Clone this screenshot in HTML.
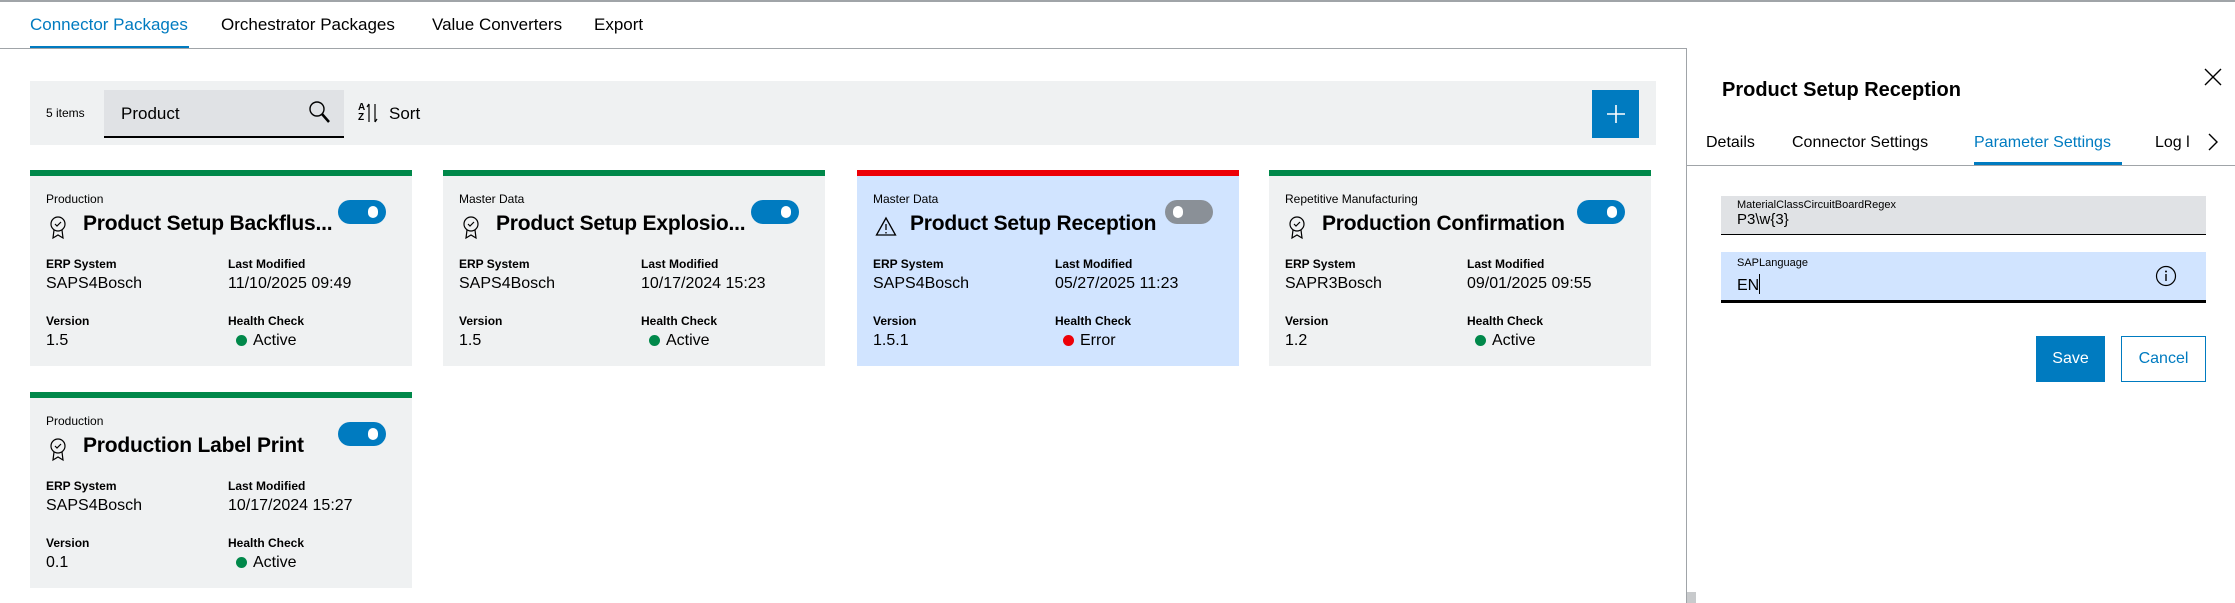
<!DOCTYPE html>
<html><head><meta charset="utf-8"><style>
*{box-sizing:border-box;margin:0;padding:0}
body{width:2235px;height:603px;overflow:hidden;background:#fff;font-family:"Liberation Sans",sans-serif;color:#000;position:relative}
.abs{position:absolute}
.topline{left:0;top:0;width:2235px;height:2px;background:#a0a4a8}
.nav{top:15px;font-size:17px;color:#000;white-space:nowrap}
.navline{left:0;top:48px;width:1686px;height:1px;background:#a0a4a8}
.toolbar{left:30px;top:81px;width:1626px;height:64px;background:#eff1f2}
.card{position:absolute;width:382px;height:196px;background:#eff1f2;border-top:6px solid #00884a}
.card .cat{position:absolute;left:16px;top:16px;font-size:12px}
.card .ic{position:absolute;left:18px;top:38px}
.card .title{position:absolute;left:53px;top:36px;font-size:21px;font-weight:bold;white-space:nowrap;letter-spacing:-0.2px}
.tog{position:absolute;left:308px;top:24px;width:48px;height:24px;border-radius:12px;background:#007bc0}
.tog:after{content:"";position:absolute;right:8px;top:6px;width:10px;height:12px;border-radius:6px;background:#fff}
.tog.off{background:#8a9097}
.tog.off:after{right:auto;left:8px}
.lb{position:absolute;font-size:12px;font-weight:bold}
.vl{position:absolute;font-size:16px}
.dot{display:inline-block;width:11px;height:11px;border-radius:50%;background:#00884a;margin-right:6px;vertical-align:-1px}
</style></head><body>
<div class="abs topline"></div>
<div class="abs nav" style="left:30px;color:#007bc0">Connector Packages</div>
<div class="abs" style="left:30px;top:46px;width:159px;height:3px;background:#007bc0"></div>
<div class="abs nav" style="left:221px">Orchestrator Packages</div>
<div class="abs nav" style="left:432px">Value Converters</div>
<div class="abs nav" style="left:594px">Export</div>
<div class="abs navline"></div>
<div class="abs" style="left:1686px;top:48px;width:1px;height:555px;background:#a0a4a8"></div>

<div class="abs toolbar"></div>
<div class="abs" style="left:46px;top:106px;font-size:12px">5 items</div>
<div class="abs" style="left:104px;top:90px;width:240px;height:48px;background:#e0e2e5;border-bottom:2px solid #000"></div>
<div class="abs" style="left:121px;top:104px;font-size:17px">Product</div>
<svg class="abs" style="left:308px;top:100px" width="24" height="26" viewBox="0 0 24 26"><circle cx="9" cy="9" r="7" fill="none" stroke="#000" stroke-width="1.4"/><path d="M14 14l7 8" stroke="#000" stroke-width="2.5"/></svg>
<div class="abs" style="left:358px;top:103px;font-size:10px;line-height:10px;font-weight:bold">A<br>Z</div>
<svg class="abs" style="left:365px;top:102px" width="14" height="22" viewBox="0 0 14 22"><path d="M4 2v18M4 2l-2 3M10 20V2M10 20l2-3" stroke="#000" fill="none" stroke-width="1.2"/></svg>
<div class="abs" style="left:389px;top:104px;font-size:17px">Sort</div>
<div class="abs" style="left:1592px;top:90px;width:47px;height:48px;background:#007bc0"></div>
<svg class="abs" style="left:1604px;top:102px" width="24" height="24"><path d="M12 3v18M3 12h18" stroke="#fff" stroke-width="1.6"/></svg>

<div class="card" style="left:30px;top:170px">
<div class="cat">Production</div>
<svg class="ic" width="20" height="28" viewBox="0 0 20 28"><circle cx="10" cy="10" r="7" fill="none" stroke="#000" stroke-width="1.2"/><path d="M7 10l2 2 4-4M6 16l-1 8 5-3 5 3-1-8" fill="none" stroke="#000" stroke-width="1.2"/></svg>
<div class="title">Product Setup Backflus...</div><div class="tog"></div>
<div class="lb" style="left:16px;top:81px">ERP System</div><div class="vl" style="left:16px;top:99px">SAPS4Bosch</div>
<div class="lb" style="left:198px;top:81px">Last Modified</div><div class="vl" style="left:198px;top:99px">11/10/2025 09:49</div>
<div class="lb" style="left:16px;top:138px">Version</div><div class="vl" style="left:16px;top:156px">1.5</div>
<div class="lb" style="left:198px;top:138px">Health Check</div><div class="vl" style="left:206px;top:156px"><span class="dot"></span>Active</div>
</div>
<div class="card" style="left:443px;top:170px">
<div class="cat">Master Data</div>
<svg class="ic" width="20" height="28" viewBox="0 0 20 28"><circle cx="10" cy="10" r="7" fill="none" stroke="#000" stroke-width="1.2"/><path d="M7 10l2 2 4-4M6 16l-1 8 5-3 5 3-1-8" fill="none" stroke="#000" stroke-width="1.2"/></svg>
<div class="title">Product Setup Explosio...</div><div class="tog"></div>
<div class="lb" style="left:16px;top:81px">ERP System</div><div class="vl" style="left:16px;top:99px">SAPS4Bosch</div>
<div class="lb" style="left:198px;top:81px">Last Modified</div><div class="vl" style="left:198px;top:99px">10/17/2024 15:23</div>
<div class="lb" style="left:16px;top:138px">Version</div><div class="vl" style="left:16px;top:156px">1.5</div>
<div class="lb" style="left:198px;top:138px">Health Check</div><div class="vl" style="left:206px;top:156px"><span class="dot"></span>Active</div>
</div>
<div class="card" style="left:857px;top:170px;background:#d1e4ff;border-top-color:#ed0007">
<div class="cat">Master Data</div>
<svg class="ic" width="22" height="26" viewBox="0 0 22 26"><path d="M11 4L1.5 21h19z" fill="none" stroke="#000" stroke-width="1.3"/><path d="M11 10v6M11 18v1.5" stroke="#000" stroke-width="1.3"/></svg>
<div class="title">Product Setup Reception</div><div class="tog off"></div>
<div class="lb" style="left:16px;top:81px">ERP System</div><div class="vl" style="left:16px;top:99px">SAPS4Bosch</div>
<div class="lb" style="left:198px;top:81px">Last Modified</div><div class="vl" style="left:198px;top:99px">05/27/2025 11:23</div>
<div class="lb" style="left:16px;top:138px">Version</div><div class="vl" style="left:16px;top:156px">1.5.1</div>
<div class="lb" style="left:198px;top:138px">Health Check</div><div class="vl" style="left:206px;top:156px"><span class="dot" style="background:#ed0007"></span>Error</div>
</div>
<div class="card" style="left:1269px;top:170px">
<div class="cat">Repetitive Manufacturing</div>
<svg class="ic" width="20" height="28" viewBox="0 0 20 28"><circle cx="10" cy="10" r="7" fill="none" stroke="#000" stroke-width="1.2"/><path d="M7 10l2 2 4-4M6 16l-1 8 5-3 5 3-1-8" fill="none" stroke="#000" stroke-width="1.2"/></svg>
<div class="title">Production Confirmation</div><div class="tog"></div>
<div class="lb" style="left:16px;top:81px">ERP System</div><div class="vl" style="left:16px;top:99px">SAPR3Bosch</div>
<div class="lb" style="left:198px;top:81px">Last Modified</div><div class="vl" style="left:198px;top:99px">09/01/2025 09:55</div>
<div class="lb" style="left:16px;top:138px">Version</div><div class="vl" style="left:16px;top:156px">1.2</div>
<div class="lb" style="left:198px;top:138px">Health Check</div><div class="vl" style="left:206px;top:156px"><span class="dot"></span>Active</div>
</div>
<div class="card" style="left:30px;top:392px">
<div class="cat">Production</div>
<svg class="ic" width="20" height="28" viewBox="0 0 20 28"><circle cx="10" cy="10" r="7" fill="none" stroke="#000" stroke-width="1.2"/><path d="M7 10l2 2 4-4M6 16l-1 8 5-3 5 3-1-8" fill="none" stroke="#000" stroke-width="1.2"/></svg>
<div class="title">Production Label Print</div><div class="tog"></div>
<div class="lb" style="left:16px;top:81px">ERP System</div><div class="vl" style="left:16px;top:99px">SAPS4Bosch</div>
<div class="lb" style="left:198px;top:81px">Last Modified</div><div class="vl" style="left:198px;top:99px">10/17/2024 15:27</div>
<div class="lb" style="left:16px;top:138px">Version</div><div class="vl" style="left:16px;top:156px">0.1</div>
<div class="lb" style="left:198px;top:138px">Health Check</div><div class="vl" style="left:206px;top:156px"><span class="dot"></span>Active</div>
</div>

<div class="abs" style="left:1722px;top:79px;font-size:20px;font-weight:bold">Product Setup Reception</div>
<svg class="abs" style="left:2204px;top:68px" width="18" height="18"><path d="M1 1l16 16M17 1L1 17" stroke="#000" stroke-width="1.4"/></svg>
<div class="abs" style="left:1706px;top:134px;font-size:16px">Details</div>
<div class="abs" style="left:1792px;top:134px;font-size:16px">Connector Settings</div>
<div class="abs" style="left:1974px;top:134px;font-size:16px;color:#007bc0">Parameter Settings</div>
<div class="abs" style="left:2155px;top:134px;font-size:16px;width:44px;overflow:hidden;white-space:nowrap">Log l</div>
<svg class="abs" style="left:2207px;top:132px" width="12" height="20"><path d="M2 2l8 8-8 8" fill="none" stroke="#000" stroke-width="1.4"/></svg>
<div class="abs" style="left:1687px;top:165px;width:548px;height:1px;background:#a0a4a8"></div>
<div class="abs" style="left:1974px;top:162px;width:148px;height:3px;background:#007bc0"></div>

<div class="abs" style="left:1721px;top:196px;width:485px;height:39px;background:#e0e2e5;border-bottom:1px solid #000"></div>
<div class="abs" style="left:1737px;top:199px;font-size:11px">MaterialClassCircuitBoardRegex</div>
<div class="abs" style="left:1737px;top:211px;font-size:15px">P3\w{3}</div>
<div class="abs" style="left:1721px;top:252px;width:485px;height:51px;background:#d1e4ff;border-bottom:3px solid #000"></div>
<div class="abs" style="left:1737px;top:257px;font-size:11px">SAPLanguage</div>
<div class="abs" style="left:1737px;top:274px;font-size:16px">EN<span style="display:inline-block;width:1px;height:20px;background:#000;vertical-align:-4px"></span></div>
<svg class="abs" style="left:2155px;top:265px" width="22" height="22"><circle cx="11" cy="11" r="9.5" fill="none" stroke="#000" stroke-width="1.2"/><path d="M11 9v7" stroke="#000" stroke-width="1.4"/><circle cx="11" cy="6.5" r="1" fill="#000"/></svg>
<div class="abs" style="left:2036px;top:336px;width:69px;height:46px;background:#007bc0;color:#fff;font-size:16px;text-align:center;line-height:46px">Save</div>
<div class="abs" style="left:2121px;top:336px;width:85px;height:46px;border:1px solid #007bc0;color:#007bc0;font-size:16px;text-align:center;line-height:44px">Cancel</div>
<div class="abs" style="left:1687px;top:592px;width:9px;height:11px;background:#c8cacc"></div>
</body></html>
